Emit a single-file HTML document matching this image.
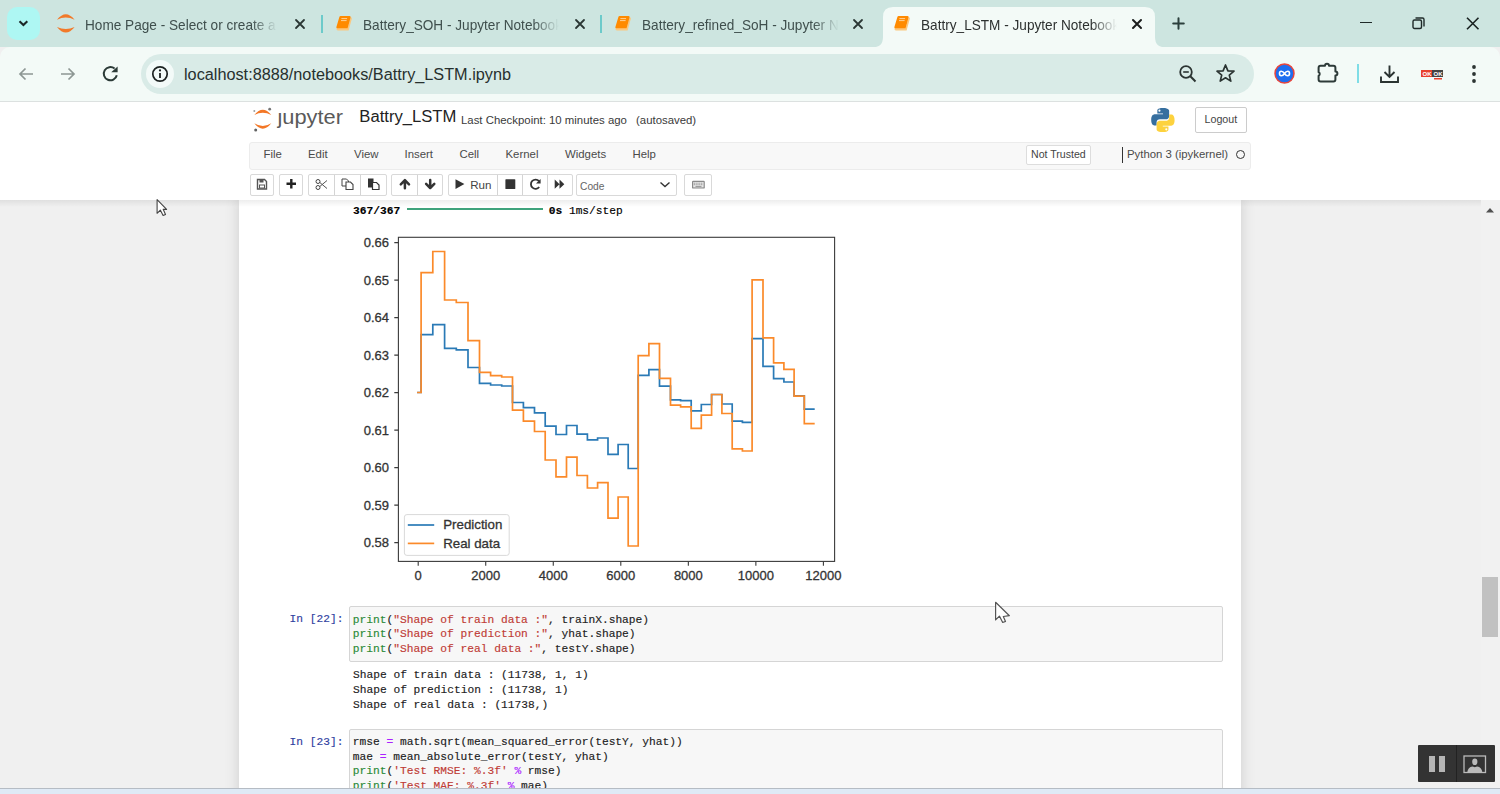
<!DOCTYPE html>
<html><head><meta charset="utf-8">
<style>
*{margin:0;padding:0;box-sizing:border-box}
html,body{width:1500px;height:794px;overflow:hidden;background:#f0f0f0;font-family:"Liberation Sans",sans-serif}
body{position:relative}
.a{position:absolute;white-space:nowrap}
svg.a{overflow:visible}
#tabs{left:0;top:0;width:1500px;height:47px;background:#cde5e0}
#addr{left:0;top:47px;width:1500px;height:54px;background:#f2f9f6}
#hdr{left:0;top:101px;width:1500px;height:99px;background:#fff}
#nb{left:239px;top:200px;width:1002px;height:600px;background:#fff;box-shadow:0 0 12px 1px rgba(87,87,87,0.2);clip-path:inset(0 -30px -30px -30px)}
#bottom{left:0;top:788px;width:1500px;height:6px;background:#dfeaf6;border-top:1px solid #b5bcc4}
.tt{font-size:14.8px;color:#3f4f4d;top:17px;line-height:16px;transform:scaleX(0.92);transform-origin:0 0}
.fade{-webkit-mask-image:linear-gradient(to right,#000 calc(100% - 28px),transparent)}
.mono{font-family:"Liberation Mono",monospace;font-size:11.22px;line-height:14.7px;-webkit-text-stroke:0.15px currentColor}
.btn{position:absolute;top:174px;height:21.5px;border:1px solid #d9d9d9;border-radius:2px;background:#fff}
.menu{font-size:11.4px;color:#4a4a4a;top:147.4px;line-height:14px}
</style></head><body>
<div id="tabs" class="a"></div>
<!-- dropdown -->
<div class="a" style="left:7px;top:7px;width:32.5px;height:32.5px;border-radius:10px;background:#aef7f3"></div>
<svg class="a" style="left:17px;top:17px" width="13" height="13" viewBox="0 0 13 13"><path d="M2.5 4.3L6.4 8.1L10.3 4.3" stroke="#1c2827" stroke-width="2.1" fill="none"/></svg>
<!-- tab1 -->
<svg class="a" style="left:52px;top:10px" width="28" height="28" viewBox="52 10 28 28"><path d="M57 19.7Q65.8 8.7 74.6 19.7Q65.8 15.5 57 19.7Z" fill="#f27a2a"/><path d="M57 26.9Q65.8 38.3 74.6 26.9Q65.8 31.1 57 26.9Z" fill="#f27a2a"/></svg>
<div class="a tt fade" style="left:85px;width:209px;overflow:hidden">Home Page - Select or create a notebook</div>
<svg class="a" style="left:294.6px;top:18.6px" width="10" height="10" viewBox="0 0 10 10"><path d="M1 1L9 9M9 1L1 9" stroke="#2a3634" stroke-width="1.8" stroke-linecap="round"/></svg>
<div class="a" style="left:321px;top:15px;width:2px;height:18px;background:#6ccaca"></div>
<!-- tab2 -->
<svg class="a" style="left:335px;top:15px" width="18" height="17" viewBox="0 0 18 17"><path d="M2 13H12.6L15.9 1.8L16.9 3.6L13.6 15.4H3Q1.2 15.4 1.5 13.5Z" fill="#fcc77e"/><path d="M5.6 1.1H14.6Q16 1.1 15.6 2.6L12.6 13.2H2.2Q1.1 13.2 1.4 12L4.3 2.2Q4.6 1.1 5.6 1.1Z" fill="#ff8a00"/><path d="M6.4 3.6H12.1M6 5.6H11.6" stroke="#ffd9a8" stroke-width="0.9"/></svg>
<div class="a tt fade" style="left:363px;width:213px;overflow:hidden">Battery_SOH - Jupyter Notebook</div>
<svg class="a" style="left:574.6px;top:18.6px" width="10" height="10" viewBox="0 0 10 10"><path d="M1 1L9 9M9 1L1 9" stroke="#2a3634" stroke-width="1.8" stroke-linecap="round"/></svg>
<div class="a" style="left:600px;top:15px;width:2px;height:18px;background:#6ccaca"></div>
<!-- tab3 -->
<svg class="a" style="left:614px;top:15px" width="18" height="17" viewBox="0 0 18 17"><path d="M2 13H12.6L15.9 1.8L16.9 3.6L13.6 15.4H3Q1.2 15.4 1.5 13.5Z" fill="#fcc77e"/><path d="M5.6 1.1H14.6Q16 1.1 15.6 2.6L12.6 13.2H2.2Q1.1 13.2 1.4 12L4.3 2.2Q4.6 1.1 5.6 1.1Z" fill="#ff8a00"/><path d="M6.4 3.6H12.1M6 5.6H11.6" stroke="#ffd9a8" stroke-width="0.9"/></svg>
<div class="a tt fade" style="left:642px;width:214px;overflow:hidden">Battery_refined_SoH - Jupyter Notebook</div>
<svg class="a" style="left:852.6px;top:18.6px" width="10" height="10" viewBox="0 0 10 10"><path d="M1 1L9 9M9 1L1 9" stroke="#2a3634" stroke-width="1.8" stroke-linecap="round"/></svg>
<!-- active tab -->
<svg class="a" style="left:872px;top:7px" width="296" height="41" viewBox="0 0 296 41"><path d="M0 40.5 Q11 40.5 11 30 V10 Q11 0 21 0 H273 Q283 0 283 10 V30 Q283 40.5 294 40.5 V41 H0Z" fill="#f3faf7"/></svg>
<svg class="a" style="left:893px;top:15px" width="18" height="17" viewBox="0 0 18 17"><path d="M2 13H12.6L15.9 1.8L16.9 3.6L13.6 15.4H3Q1.2 15.4 1.5 13.5Z" fill="#fcc77e"/><path d="M5.6 1.1H14.6Q16 1.1 15.6 2.6L12.6 13.2H2.2Q1.1 13.2 1.4 12L4.3 2.2Q4.6 1.1 5.6 1.1Z" fill="#ff8a00"/><path d="M6.4 3.6H12.1M6 5.6H11.6" stroke="#ffd9a8" stroke-width="0.9"/></svg>
<div class="a tt fade" style="left:921px;width:213px;overflow:hidden;color:#2d3130">Battry_LSTM - Jupyter Notebook</div>
<svg class="a" style="left:1131.6px;top:18.6px" width="10" height="10" viewBox="0 0 10 10"><path d="M1 1L9 9M9 1L1 9" stroke="#1a1c1c" stroke-width="2" stroke-linecap="round"/></svg>
<!-- new tab + window controls -->
<svg class="a" style="left:1172.4px;top:16.9px" width="13" height="13" viewBox="0 0 13 13"><path d="M6.5 1.2V11.8M1.2 6.5H11.8" stroke="#2b3f3c" stroke-width="2" stroke-linecap="round"/></svg>
<div class="a" style="left:1360.3px;top:22px;width:11.7px;height:1.4px;background:#1f2a29"></div>
<svg class="a" style="left:1412px;top:17px" width="13" height="13" viewBox="0 0 13 13"><rect x="1" y="3" width="8.5" height="8.5" rx="1.5" stroke="#1f2a29" stroke-width="1.4" fill="none"/><path d="M3.5 1H10.5Q12 1 12 2.5V9.5" stroke="#1f2a29" stroke-width="1.4" fill="none"/></svg>
<svg class="a" style="left:1466px;top:17px" width="13" height="13" viewBox="0 0 13 13"><path d="M1 0.7L12.5 12.3M12.5 0.7L1 12.3" stroke="#1a2322" stroke-width="1.6"/></svg>
<!-- address row -->
<div class="a" style="left:0;top:47px;width:1500px;height:54px;background:#f3faf7;border-top-right-radius:10px;border-top-left-radius:10px"></div>
<svg class="a" style="left:17px;top:65px" width="18" height="18" viewBox="0 0 18 18"><path d="M16 9H3M8.5 3.5L3 9L8.5 14.5" stroke="#8d9794" stroke-width="1.7" fill="none"/></svg>
<svg class="a" style="left:58.8px;top:65px" width="18" height="18" viewBox="0 0 18 18"><path d="M2 9H15M9.5 3.5L15 9L9.5 14.5" stroke="#8d9794" stroke-width="1.7" fill="none"/></svg>
<svg class="a" style="left:101px;top:64px" width="19" height="19" viewBox="0 0 19 19"><path d="M15.8 11.2A6.6 6.6 0 1 1 13.6 4.6" stroke="#2b3a37" stroke-width="2" fill="none"/><path d="M10.2 8.2L16.6 2.6V8.2Z" fill="#2b3a37"/></svg>
<div class="a" style="left:141px;top:54px;width:1113px;height:39.5px;border-radius:20px;background:#d9ebe7"></div>
<div class="a" style="left:146px;top:60px;width:28px;height:28px;border-radius:14px;background:#f3faf8"></div>
<svg class="a" style="left:151px;top:65px" width="18" height="18" viewBox="0 0 18 18"><circle cx="9" cy="9" r="7.2" stroke="#1c2120" stroke-width="1.7" fill="none"/><path d="M9 8V13" stroke="#1c2120" stroke-width="1.8"/><circle cx="9" cy="5.4" r="1.1" fill="#1c2120"/></svg>
<div class="a" style="left:184px;top:64.5px;font-size:16.25px;line-height:19px;color:#27302e">localhost:8888/notebooks/Battry_LSTM.ipynb</div>
<svg class="a" style="left:1178px;top:64px" width="20" height="20" viewBox="0 0 20 20"><circle cx="8" cy="8" r="5.8" stroke="#2b3432" stroke-width="1.8" fill="none"/><path d="M12.3 12.3L17.5 17.5" stroke="#2b3432" stroke-width="2"/><path d="M5.2 8H10.8" stroke="#2b3432" stroke-width="1.6"/></svg>
<svg class="a" style="left:1215px;top:63px" width="21" height="21" viewBox="0 0 21 21"><path d="M10.5 2L12.9 7.8L19 8.2L14.3 12.1L15.8 18.1L10.5 14.8L5.2 18.1L6.7 12.1L2 8.2L8.1 7.8Z" stroke="#2b3432" stroke-width="1.7" fill="none" stroke-linejoin="round"/></svg>
<svg class="a" style="left:1274px;top:63px" width="21" height="21" viewBox="0 0 21 21"><circle cx="10.5" cy="10.5" r="9.5" fill="#1d6ef0" stroke="#e8453c" stroke-width="1.5"/><path d="M10.5 10.5C8.5 7.5 5.5 7.5 5.5 10.5C5.5 13.5 8.5 13.5 10.5 10.5C12.5 7.5 15.5 7.5 15.5 10.5C15.5 13.5 12.5 13.5 10.5 10.5Z" stroke="#fff" stroke-width="1.6" fill="none"/></svg>
<svg class="a" style="left:1316px;top:63px" width="23" height="21" viewBox="0 0 23 21"><path d="M4.6 2.8H9A2 2 0 0 1 13 2.8H17.4Q19.4 2.8 19.4 4.8V8.6A2 2 0 0 1 19.4 12.6V16.4Q19.4 18.4 17.4 18.4H4.6Q2.6 18.4 2.6 16.4V12.8A2 2 0 0 0 2.6 9.2V4.8Q2.6 2.8 4.6 2.8Z" stroke="#2d3a38" stroke-width="2" fill="none" stroke-linejoin="round"/></svg>
<div class="a" style="left:1357px;top:64px;width:2px;height:19px;background:#7fdde6"></div>
<svg class="a" style="left:1379px;top:64px" width="21" height="20" viewBox="0 0 21 20"><path d="M10.5 1.5V13M5.5 8L10.5 13L15.5 8M2 12.5V18H19V12.5" stroke="#2b3432" stroke-width="1.9" fill="none"/></svg>
<svg class="a" style="left:1421px;top:69px" width="23" height="11" viewBox="0 0 23 11"><rect x="0" y="1" width="11" height="7" fill="#e8412e"/><rect x="11" y="1" width="11" height="7" fill="#444"/><text x="1.5" y="7" font-size="6" font-family="Liberation Sans" font-weight="bold" fill="#fff">OK</text><text x="12.5" y="7" font-size="6" font-family="Liberation Sans" font-weight="bold" fill="#fff">OK</text><rect x="13" y="9" width="8" height="1.5" fill="#e8412e"/></svg>
<svg class="a" style="left:1470px;top:64px" width="8" height="20" viewBox="0 0 8 20"><circle cx="4" cy="3" r="1.9" fill="#2b3432"/><circle cx="4" cy="10" r="1.9" fill="#2b3432"/><circle cx="4" cy="17" r="1.9" fill="#2b3432"/></svg>
<!-- jupyter header -->
<div id="hdr" class="a"></div>
<div class="a" style="left:0;top:101px;width:1500px;height:1px;background:#dce1e0"></div>
<svg class="a" style="left:250px;top:104px" width="100" height="30" viewBox="250 104 100 30">
<path d="M254.3 115Q262.8 104.7 271.3 115Q262.8 110.4 254.3 115Z" fill="#f37726"/>
<path d="M254.3 123.3Q262.8 134.1 271.3 123.3Q262.8 128.7 254.3 123.3Z" fill="#f37726"/>
<circle cx="269.7" cy="109.2" r="1.4" fill="#767677"/><circle cx="254.3" cy="111" r="1" fill="#9e9e9e"/><circle cx="255.7" cy="130" r="1.5" fill="#616262"/>
<text x="277.5" y="124" font-family="Liberation Sans" font-size="20.5" fill="#5a5a5a" textLength="65.5" lengthAdjust="spacingAndGlyphs">ȷupyter</text>
</svg>
<div class="a" style="left:359.3px;top:107px;font-size:16.65px;line-height:20px;color:#222">Battry_LSTM</div>
<div class="a" style="left:461px;top:112.5px;font-size:11.4px;line-height:14px;color:#3a3a3a">Last Checkpoint: 10 minutes ago</div>
<div class="a" style="left:636px;top:112.5px;font-size:11.4px;line-height:14px;color:#3a3a3a">(autosaved)</div>
<svg class="a" style="left:1150px;top:107px" width="26" height="26" viewBox="0 0 110 110">
<path d="M54 4C29 4 31 15 31 15V27H55V31H21C21 31 5 29 5 54C5 79 19 78 19 78H28V66C28 66 27 52 42 52H67C67 52 81 52 81 38V16C81 16 83 4 54 4ZM40 11A4.5 4.5 0 1 1 40 20A4.5 4.5 0 1 1 40 11Z" fill="#366f9f"/>
<path d="M55 106C80 106 78 95 78 95V83H54V79H88C88 79 104 81 104 56C104 31 90 32 90 32H81V44C81 44 82 58 67 58H42C42 58 28 58 28 72V94C28 94 26 106 55 106ZM69 99A4.5 4.5 0 1 1 69 90A4.5 4.5 0 1 1 69 99Z" fill="#fdd23e"/>
</svg>
<div class="a" style="left:1195px;top:107px;width:52px;height:26px;border:1px solid #ccc;border-radius:2px;background:#fff"></div>
<div class="a" style="left:1204.5px;top:112px;font-size:10.7px;line-height:14px;color:#444">Logout</div>
<!-- menubar -->
<div class="a" style="left:249px;top:142px;width:1002px;height:28px;background:#f8f8f8;border:1px solid #ececec;border-radius:3px"></div>
<div class="a menu" style="left:263.5px">File</div>
<div class="a menu" style="left:308px">Edit</div>
<div class="a menu" style="left:354px">View</div>
<div class="a menu" style="left:404.5px">Insert</div>
<div class="a menu" style="left:459.5px">Cell</div>
<div class="a menu" style="left:505.5px">Kernel</div>
<div class="a menu" style="left:565px">Widgets</div>
<div class="a menu" style="left:632.5px">Help</div>
<div class="a" style="left:1026px;top:145px;width:65px;height:20px;border:1px solid #ddd;border-radius:2px;background:#fff"></div>
<div class="a" style="left:1031px;top:148.3px;font-size:10.6px;line-height:13px;color:#444">Not Trusted</div>
<div class="a" style="left:1122px;top:147px;width:1px;height:16px;background:#333"></div>
<div class="a menu" style="left:1127px;font-size:11.37px">Python 3 (ipykernel)</div>
<div class="a" style="left:1236.3px;top:149.7px;width:9px;height:9px;border:1.6px solid #333;border-radius:50%"></div>
<!-- toolbar -->
<div class="btn" style="left:249.5px;width:24.5px"></div>
<div class="btn" style="left:279px;width:24px"></div>
<div class="btn" style="left:308px;width:79px"></div>
<div class="a" style="left:334px;top:175px;width:1px;height:20px;background:#d4d4d4"></div>
<div class="a" style="left:360px;top:175px;width:1px;height:20px;background:#d4d4d4"></div>
<div class="btn" style="left:391px;width:52px"></div>
<div class="a" style="left:417px;top:175px;width:1px;height:20px;background:#d4d4d4"></div>
<div class="btn" style="left:448px;width:124.5px"></div>
<div class="a" style="left:497px;top:175px;width:1px;height:20px;background:#d4d4d4"></div>
<div class="a" style="left:522px;top:175px;width:1px;height:20px;background:#d4d4d4"></div>
<div class="a" style="left:547px;top:175px;width:1px;height:20px;background:#d4d4d4"></div>
<div class="btn" style="left:576px;width:101px"></div>
<div class="btn" style="left:684px;width:28px"></div>
<svg class="a" style="left:245px;top:170px" width="480" height="30" viewBox="0 0 480 30">
<!-- save -->
<path d="M12.5 9.5H19.5L21.5 11.5V19H12.5Z" stroke="#555" stroke-width="1.4" fill="none"/><rect x="14.5" y="9.5" width="4" height="3" fill="#555"/><rect x="14.5" y="15" width="5" height="3" fill="none" stroke="#555" stroke-width="1"/>
<!-- plus -->
<path d="M46.3 9V18.5M41.5 13.8H51" stroke="#222" stroke-width="2.4"/>
<!-- scissors -->
<circle cx="73" cy="11.5" r="2" stroke="#444" stroke-width="1" fill="none"/><circle cx="73" cy="17.5" r="2" stroke="#444" stroke-width="1" fill="none"/><path d="M74.8 12.5L82 18.5M74.8 16.5L82 10.5" stroke="#555" stroke-width="1"/>
<!-- copy -->
<path d="M97 9H101.5L103.5 11V16H97Z" stroke="#444" stroke-width="1" fill="#fff"/><path d="M101 12H105.5L108 14.5V19.5H101Z" stroke="#444" stroke-width="1.1" fill="#fff"/>
<!-- paste -->
<rect x="123" y="8.5" width="5.5" height="9" fill="#333"/><path d="M127.5 12.5H131.5L134 15V19.5H127.5Z" stroke="#333" stroke-width="1.2" fill="#fff"/>
<!-- up/down -->
<path d="M159.9 18.3V11M155.8 14.3L159.9 10.2L164 14.3" stroke="#333" stroke-width="2.5" fill="none" stroke-linecap="round" stroke-linejoin="round"/>
<path d="M185.2 9.9V17.2M181.1 13.9L185.2 18L189.3 13.9" stroke="#333" stroke-width="2.5" fill="none" stroke-linecap="round" stroke-linejoin="round"/>
<!-- run -->
<path d="M210.5 9.3V18.9L219.4 14.1Z" fill="#333"/>
<text x="225.2" y="18.6" font-family="Liberation Sans" font-size="11.6" fill="#444">Run</text>
<rect x="260.4" y="9.2" width="9.9" height="9.9" rx="0.6" fill="#333"/>
<path d="M294 11.2A4.6 4.6 0 1 0 294.2 17" stroke="#333" stroke-width="1.8" fill="none"/><path d="M295.6 9V13.6H291Z" fill="#333"/>
<path d="M309.7 9.5V18.8L314.5 14.15ZM314.5 9.5V18.8L319.3 14.15Z" fill="#333"/>
<!-- code select -->
<text x="335" y="20.3" font-family="Liberation Sans" font-size="11.2" fill="#666" textLength="24.5" lengthAdjust="spacingAndGlyphs">Code</text>
<path d="M415.5 12.5L420 16.5L424.5 12.5" stroke="#333" stroke-width="1.4" fill="none"/>
<!-- keyboard -->
<rect x="447" y="10.8" width="12.8" height="7.8" rx="1.2" fill="#8a8a8a"/><rect x="448.2" y="12" width="10.4" height="5.4" fill="#e8e8e8"/><path d="M448.8 13.2H458M448.8 14.7H458" stroke="#8a8a8a" stroke-width="0.8" stroke-dasharray="1.2 0.6"/><path d="M450.5 16.4H456.5" stroke="#8a8a8a" stroke-width="0.9"/>
</svg>

<!-- notebook -->
<div id="nb" class="a"></div>
<div class="a" style="left:0;top:200px;width:1500px;height:7px;background:linear-gradient(rgba(0,0,0,0.07),rgba(0,0,0,0))"></div>
<div class="a mono" style="left:353px;top:203.5px;color:#000"><b>367/367</b> <span style="color:#fff">━━━━━━━━━━━━━━━━━━━━</span> <b>0s</b> 1ms/step</div>
<div class="a" style="left:407.3px;top:208.3px;width:135.5px;height:2px;background:#3fa37c"></div>
<svg class="a" style="left:0;top:0" width="1500" height="794" viewBox="0 0 1500 794">
<g font-family="Liberation Sans" font-size="13" fill="#333" stroke="#333" stroke-width="0.3"><text x="389" y="547.30" text-anchor="end">0.58</text><text x="389" y="509.80" text-anchor="end">0.59</text><text x="389" y="472.30" text-anchor="end">0.60</text><text x="389" y="434.80" text-anchor="end">0.61</text><text x="389" y="397.30" text-anchor="end">0.62</text><text x="389" y="359.80" text-anchor="end">0.63</text><text x="389" y="322.30" text-anchor="end">0.64</text><text x="389" y="284.80" text-anchor="end">0.65</text><text x="389" y="247.30" text-anchor="end">0.66</text><text x="418.20" y="579.7" text-anchor="middle">0</text><text x="485.73" y="579.7" text-anchor="middle">2000</text><text x="553.27" y="579.7" text-anchor="middle">4000</text><text x="620.80" y="579.7" text-anchor="middle">6000</text><text x="688.34" y="579.7" text-anchor="middle">8000</text><text x="755.87" y="579.7" text-anchor="middle">10000</text><text x="823.40" y="579.7" text-anchor="middle">12000</text></g>
<path d="M417.1 392.5H421.1V334.7H432.8V324.6H444.6V348.4H456.3V349.8H468.0V367.5H479.5V383.4H490.6V385.0H501.7V386.0H512.5V402.5H523.4V407.6H534.5V412.8H545.2V426.2H556.0V434.5H566.5V425.5H577.0V434.2H587.4V439.8H597.6V438.0H608.0V454.4H618.1V444.5H628.2V468.5H638.2V375.4H648.9V369.6H659.5V386.2H670.5V399.9H680.6V400.6H691.2V410.8H701.3V404.5H711.6V394.5H721.9V404.0H732.2V421.2H742.4V422.4H752.1V338.6H763.0V366.3H773.6V378.6H783.9V382.0H794.1V395.8H804.3V409.1H814.7" stroke="#2a7ab6" stroke-width="1.7" fill="none" stroke-linejoin="miter"/>
<path d="M417.1 392.5H421.1V272.6H432.8V251.5H444.6V300.0H456.3V302.5H468.0V340.7H479.5V372.4H490.6V375.6H501.7V377.0H512.5V410.1H523.4V421.2H534.5V431.5H545.2V460.0H556.0V476.9H566.5V457.2H577.0V475.5H587.4V488.0H597.6V482.7H608.0V518.2H618.1V497.0H628.2V546.0H638.2V355.7H648.9V343.6H659.5V378.4H670.5V405.1H680.6V406.8H691.2V428.3H701.3V415.2H711.6V394.5H721.9V413.5H732.2V448.8H742.4V451.0H752.1V279.8H763.0V337.8H773.6V362.8H783.9V369.4H794.1V396.1H804.3V423.7H814.7" stroke="#fb8a2a" stroke-width="1.7" fill="none" stroke-linejoin="miter"/>
<rect x="398.4" y="237.3" width="436.2" height="324.1" stroke="#3a3a3a" stroke-width="1.1" fill="none"/>
<path d="M394.3 542.60H398.4M394.3 505.10H398.4M394.3 467.60H398.4M394.3 430.10H398.4M394.3 392.60H398.4M394.3 355.10H398.4M394.3 317.60H398.4M394.3 280.10H398.4M394.3 242.60H398.4M418.20 561.4V565.7M485.73 561.4V565.7M553.27 561.4V565.7M620.80 561.4V565.7M688.34 561.4V565.7M755.87 561.4V565.7M823.40 561.4V565.7" stroke="#3a3a3a" stroke-width="1.1"/>
<rect x="404.4" y="514.6" width="104.8" height="40.8" rx="2.5" stroke="#d9d9d9" stroke-width="1" fill="#fff" fill-opacity="0.8"/>
<path d="M407.8 525H434.2" stroke="#2a7ab6" stroke-width="1.7"/>
<path d="M407.8 543.4H434.2" stroke="#fb8a2a" stroke-width="1.7"/>
<text x="443.2" y="529.4" font-family="Liberation Sans" font-size="13.3" fill="#333" stroke="#333" stroke-width="0.3">Prediction</text>
<text x="443.2" y="548" font-family="Liberation Sans" font-size="13.3" fill="#333" stroke="#333" stroke-width="0.3">Real data</text>
</svg><!-- cell 22 -->
<div class="a mono" style="left:289.5px;top:612px;color:#303f9f">In [22]:</div>
<div class="a" style="left:348.5px;top:606px;width:874px;height:55.5px;background:#f7f7f7;border:1px solid #d5d5d5;border-radius:2px"></div>
<div class="a mono" style="left:352.8px;top:612.5px;color:#222"><span style="color:#2a8a36">print</span>(<span style="color:#bf3b35">"Shape of train data :"</span>, trainX.shape)<br><span style="color:#2a8a36">print</span>(<span style="color:#bf3b35">"Shape of prediction :"</span>, yhat.shape)<br><span style="color:#2a8a36">print</span>(<span style="color:#bf3b35">"Shape of real data :"</span>, testY.shape)</div>
<div class="a mono" style="left:353px;top:668px;color:#222;line-height:15.2px">Shape of train data : (11738, 1, 1)<br>Shape of prediction : (11738, 1)<br>Shape of real data : (11738,)</div>
<!-- cell 23 -->
<div class="a mono" style="left:289.5px;top:735px;color:#303f9f">In [23]:</div>
<div class="a" style="left:348.5px;top:728.5px;width:874px;height:70px;background:#f7f7f7;border:1px solid #d5d5d5;border-radius:2px"></div>
<div class="a mono" style="left:352.8px;top:735px;color:#222">rmse <span style="color:#aa22ff">=</span> math.sqrt(mean_squared_error(testY, yhat))<br>mae <span style="color:#aa22ff">=</span> mean_absolute_error(testY, yhat)<br><span style="color:#2a8a36">print</span>(<span style="color:#bf3b35">'Test RMSE: %.3f'</span> <span style="color:#aa22ff">%</span> rmse)<br><span style="color:#2a8a36">print</span>(<span style="color:#bf3b35">'Test MAE: %.3f'</span> <span style="color:#aa22ff">%</span> mae)</div>
<!-- scrollbar -->
<div class="a" style="left:1481px;top:200px;width:19px;height:588px;background:#f1f1f1"></div>
<svg class="a" style="left:1485px;top:207px" width="10" height="6" viewBox="0 0 10 6"><path d="M1 5.6L5 1L9 5.6Z" fill="#505050"/></svg>
<div class="a" style="left:1482.2px;top:576.8px;width:16.2px;height:59.8px;background:#c1c1c1"></div>
<!-- video control -->
<div class="a" style="left:1418px;top:745px;width:77px;height:37px;background:#333;border-radius:1px"></div>
<div class="a" style="left:1456px;top:745px;width:1px;height:37px;background:#222"></div>
<div class="a" style="left:1428.5px;top:756px;width:6px;height:16px;background:#b5b5b5"></div>
<div class="a" style="left:1438.8px;top:756px;width:6px;height:16px;background:#b5b5b5"></div>
<svg class="a" style="left:1463px;top:755px" width="24" height="19" viewBox="0 0 24 19"><rect x="1" y="1" width="21.5" height="16.5" stroke="#bbb" stroke-width="1.3" fill="none"/><ellipse cx="11.8" cy="6.8" rx="2.6" ry="3.3" fill="#bbb"/><path d="M4.2 17.5Q5 12.2 9.5 11.6L11.8 12.2L14.1 11.6Q18.6 12.2 19.4 17.5Z" fill="#bbb"/></svg>
<!-- cursors -->
<svg class="a" style="left:150px;top:195px" width="25" height="28" viewBox="0 0 25 28"><path d="M7.1 4.7V18.3L10.3 15.1L13.1 20.5L15.5 19.4L13.2 14.3L16.6 14.4Z" fill="#fff" stroke="#444" stroke-width="1.1" stroke-linejoin="round"/></svg>
<svg class="a" style="left:990px;top:597px" width="28" height="32" viewBox="0 0 28 32"><path d="M5.6 5.3V22.9L9.4 19.1L12.7 25.5L15.5 24.4L13.3 19.5L19.4 18.7Z" fill="#fff" stroke="#555" stroke-width="1.2" stroke-linejoin="round"/></svg>
<div id="bottom" class="a"></div>
</body></html>
